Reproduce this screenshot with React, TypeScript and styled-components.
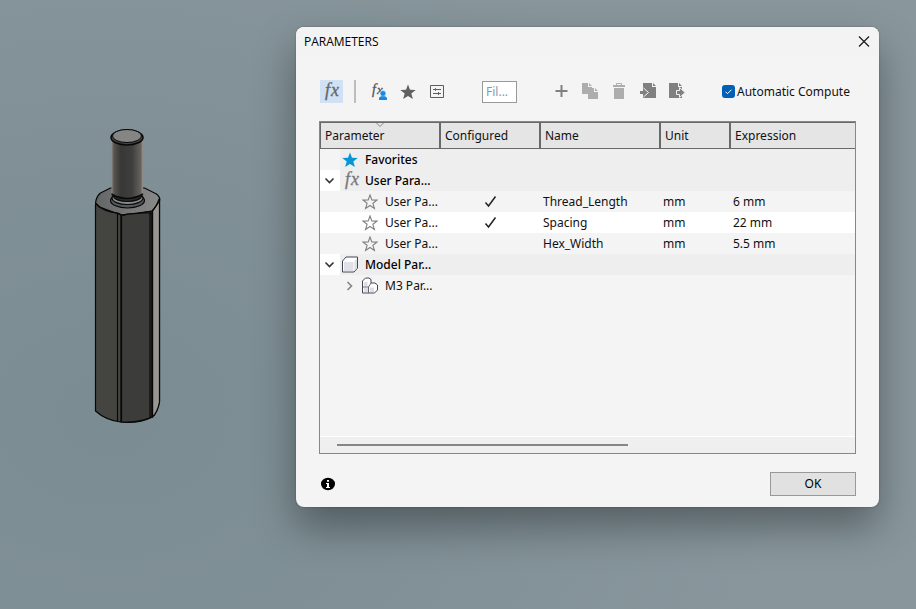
import React from "react";
import styled, { createGlobalStyle } from "styled-components";

const GlobalStyle = createGlobalStyle`
  *, *::before, *::after { box-sizing: border-box; }
  body {
    margin: 0;
    font-family: "Noto Sans", "Open Sans", sans-serif;
    font-size: 12px;
    line-height: 20px;
    color: #111;
  }
`;

const Scene = styled.main`
  display: flex;
  align-items: flex-start;
  min-height: 100vh;
  padding: 27px 37px 27px 0;
  background: radial-gradient(ellipse 75% 90% at 12% 68%, #7b8c93 0%, #809096 50%, #89979d 100%);
`;

const Viewport = styled.section`
  flex: 0 0 296px;
  padding: 100px 0 0 93px;
`;

const Dialog = styled.section`
  flex: 1 1 auto;
  min-width: 560px;
  display: flex;
  flex-direction: column;
  border-radius: 8px;
  background: #f4f4f4;
  box-shadow: 0 0 2px rgba(0, 0, 0, 0.3), 0 20px 40px rgba(0, 0, 0, 0.36);
`;

const TitleBar = styled.header`
  display: flex;
  align-items: center;
  justify-content: space-between;
  height: 29px;
  padding: 0 8px;
  border-radius: 8px 8px 0 0;
  background: #f3f3f3;
`;

const Title = styled.h1`
  margin: 0;
  font-family: "Open Sans", "Noto Sans", sans-serif;
  font-size: 12px;
  font-weight: 400;
  line-height: 20px;
  color: #000;
`;

const PlainButton = styled.button`
  display: flex;
  align-items: center;
  justify-content: center;
  padding: 0;
  border: 0;
  background: none;
  color: inherit;
`;

const Content = styled.div`
  display: flex;
  flex-direction: column;
  padding: 24px 23px 11px;
`;

const Toolbar = styled.div`
  display: flex;
  align-items: center;
  height: 23px;
  margin-bottom: 18px;
  padding-left: 1px;
`;

const ToolGroup = styled.div`
  display: flex;
  gap: 6px;
`;

const ToolButton = styled(PlainButton)<{ $active?: boolean }>`
  width: 23px;
  height: 23px;
  background: ${(p) => (p.$active ? "#cfe1f3" : "transparent")};
`;

const Separator = styled.span`
  width: 2px;
  height: 23px;
  margin: 0 11px;
  background: #bdbdbd;
`;

const Filter = styled.input`
  width: 35px;
  height: 22px;
  margin: 0 33px 0 34px;
  padding: 0 3px;
  border: 1px solid #999;
  border-radius: 0;
  background: #fff;
  font: inherit;
  &::placeholder { color: #7f9bb5; opacity: 1; }
`;

const AutoCompute = styled.label`
  display: flex;
  align-items: center;
  gap: 2px;
  margin-left: 33px;
  white-space: nowrap;
`;

const CheckBox = styled.input`
  appearance: none;
  width: 13px;
  height: 13px;
  margin: 0;
  border-radius: 3px;
  background: #005fb8 url("data:image/svg+xml,%3Csvg xmlns='http://www.w3.org/2000/svg' viewBox='0 0 13 13'%3E%3Cpath d='M3.5 6.7l2 2 4-4' fill='none' stroke='white'/%3E%3C/svg%3E");
`;

const TableFrame = styled.div`
  display: flex;
  flex-direction: column;
  min-height: 333px;
  border: 1px solid #828790;
`;

const Table = styled.table`
  width: 100%;
  table-layout: fixed;
  border-collapse: separate;
  border-spacing: 0;
`;

const HeadCell = styled.th`
  position: relative;
  height: 27px;
  padding: 0 4px;
  border: 1px solid #696969;
  background: #e5e5e5;
  font-weight: 400;
  line-height: 20px;
  text-align: left;
  &:last-child { border-right: 0; }
`;

const SortMark = styled.svg`
  position: absolute;
  top: 0;
  left: calc(50% - 4px);
`;

const Row = styled.tr<{ $tone: string }>`
  background: ${(p) => p.$tone};
`;

const Cell = styled.td`
  height: 21px;
  padding: 0 3px;
  line-height: 20px;
  white-space: nowrap;
`;

const CheckSlot = styled.div`
  display: flex;
  align-items: center;
  justify-content: center;
  height: 19px;
`;

const TreeCell = styled.td`
  height: 21px;
  padding: 0;
`;

const TreeItem = styled.div<{ $child?: boolean }>`
  display: flex;
  align-items: center;
  height: 21px;
  padding-left: ${(p) => (p.$child ? 20 : 0)}px;
`;

const Expander = styled(PlainButton)<{ $tone: string }>`
  flex: 0 0 20px;
  height: 21px;
  background: ${(p) => p.$tone};
`;

const Gutter = styled.span<{ $tone: string }>`
  flex: 0 0 20px;
  height: 21px;
  background: ${(p) => p.$tone};
`;

const IconSlot = styled.span`
  display: flex;
  flex: 0 0 25px;
  align-items: center;
  padding-left: 2px;
`;

const Name = styled.span<{ $strong?: boolean }>`
  line-height: 20px;
  white-space: nowrap;
  font-weight: ${(p) => (p.$strong ? 500 : 400)};
  color: ${(p) => (p.$strong ? "#000" : "#111")};
`;

const ScrollBar = styled.div`
  height: 17px;
  margin-top: auto;
  padding: 7px 17px;
  border-top: 1px solid #fff;
  background: #efefef;
`;

const Thumb = styled.div`
  width: 58%;
  height: 2px;
  background: #868686;
`;

const Footer = styled.footer`
  display: flex;
  align-items: center;
  justify-content: space-between;
  padding: 18px 0 0 2px;
`;

const OkButton = styled.button`
  width: 86px;
  height: 24px;
  padding: 0;
  border: 1px solid #999;
  background: #e1e1e1;
  font: inherit;
  color: #000;
`;

const Glyph = styled.svg`
  overflow: visible;
`;

const GlyphText = styled.text`
  font-family: "Liberation Serif", serif;
  font-style: italic;
`;

const STAR = "M8 1 L9.8 6 L15 6.1 L10.9 9.3 L12.4 14.5 L8 11.5 L3.6 14.5 L5.1 9.3 L1 6.1 L6.2 6 Z";
const BIG_STAR = "M8 .5 L10 5.7 L15.7 5.900 L11.3 9.500 L12.9 15 L8 11.900 L3.100 15 L4.700 9.500 L.3 5.900 L6 5.700 Z";

const FxIcon = ({ color = "#666" }: { color?: string }) => (
  <Glyph width="19" height="21" viewBox="0 0 19 21" aria-hidden="true">
    <GlyphText x="3" y="15" fontSize="18" fill={color} stroke={color} strokeWidth=".3">f</GlyphText>
    <GlyphText x="9" y="15" fontSize="18" fill={color} stroke={color} strokeWidth=".3">x</GlyphText>
  </Glyph>
);

const FxUserIcon = () => (
  <Glyph width="19" height="19" viewBox="0 0 19 19" aria-hidden="true">
    <GlyphText x="3" y="12" fontSize="14" fill="#555" stroke="#555" strokeWidth=".3">f</GlyphText>
    <GlyphText x="8" y="12" fontSize="13" fill="#555" stroke="#555" strokeWidth=".3">x</GlyphText>
    <circle cx="14" cy="11.500" r="2.900" fill="#1688e5" stroke="#f4f4f4" strokeWidth=".6" />
    <path d="M10 18v-2.200l2-1.500h4l2 1.500V18z" fill="#1688e5" />
  </Glyph>
);

const StarIcon = ({ kind }: { kind: "tool" | "favorite" | "outline" }) => (
  <svg width="16" height="16" viewBox="0 0 16 16" aria-hidden="true">
    <path
      d={kind === "outline" ? STAR : BIG_STAR}
      fill={kind === "outline" ? "none" : kind === "tool" ? "#606060" : "#0696d7"}
      stroke={kind === "outline" ? "#808080" : "none"}
      strokeWidth="1.100"
    />
  </svg>
);

const ListIcon = () => (
  <svg width="15" height="15" viewBox="0 0 15 15" fill="none" stroke="#5c5c5c" aria-hidden="true">
    <path d="M1.500 1.500h13v12h-13z" />
    <path d="M4 5.500h8M4 9.500h8" />
    <path d="M6.500 4v3" stroke="#1688e5" />
    <path d="M9.500 8v3" />
  </svg>
);

const PlusIcon = () => (
  <svg width="13" height="13" viewBox="0 0 13 13" aria-hidden="true">
    <path d="M.5 6h12M6.500 0v12" stroke="#808080" strokeWidth="2" />
  </svg>
);

const CopyIcon = () => (
  <svg width="17" height="17" viewBox="0 0 17 17" fill="#adadad" aria-hidden="true">
    <path d="M0 0h6v4h4v1H6v6H0zM7 0l3 3H7zM6 5h6v4h4v7H6zM13 5l3 3h-3z" />
  </svg>
);

const TrashIcon = () => (
  <svg width="13" height="17" viewBox="0 0 13 17" aria-hidden="true">
    <path d="M0 2h12v2H0zM1 5h10v11H1z" fill="#adadad" />
    <path d="M3.500 2V.5h5V2" fill="none" stroke="#adadad" />
  </svg>
);

const ImportIcon = () => (
  <svg width="17" height="17" viewBox="0 0 17 17" aria-hidden="true">
    <path d="M3 0h9v4h4v11H3zM13 0l3 3h-3z" fill="#808080" />
    <path d="M0 8h3V5h1l5 4.500L4 14H3v-3H0z" fill="#808080" />
    <path d="M3.500 5l5 4.500-5 4.500" fill="none" stroke="#f4f4f4" />
  </svg>
);

const ExportIcon = () => (
  <svg width="17" height="17" viewBox="0 0 17 17" aria-hidden="true">
    <path d="M0 0h9v4h4v11H0zM10 0l3 3h-3z" fill="#808080" />
    <path d="M7.500 7.500h3V4.500l5.700 5-5.700 5v-3h-3z" fill="#808080" stroke="#f4f4f4" />
  </svg>
);

const CloseIcon = () => (
  <svg width="14" height="14" viewBox="0 0 14 14" aria-hidden="true">
    <path d="M2 1.500l10 10M12 1.500L2 11.500" stroke="#1b1b1b" strokeWidth="1.200" />
  </svg>
);

const ChevronIcon = ({ open }: { open?: boolean }) => (
  <svg width="12" height="12" viewBox="0 0 12 12" fill="none" aria-hidden="true">
    {open ? (
      <path d="M1.500 3.500l4 4 4-4" stroke="#333" strokeWidth="1.600" />
    ) : (
      <path d="M3.500 2l4 4-4 4" stroke="#858585" strokeWidth="1.600" />
    )}
  </svg>
);

const CheckIcon = () => (
  <svg width="13" height="13" viewBox="0 0 13 13" role="img" aria-label="Configured">
    <path d="M1.500 7.500l3 3.500L11.500 1.500" fill="none" stroke="#222" strokeWidth="1.500" />
  </svg>
);

const BoxIcon = () => (
  <svg width="18" height="17" viewBox="0 0 18 17" strokeLinejoin="round" aria-hidden="true">
    <path d="M.5 5L4 1h11.500v11l-3.500 4H.5z" fill="#fff" stroke="#444450" />
    <path d="M2 6h9.500v9H2z" fill="#dfe0e8" />
    <path d="M12.500 5L15 2.500V12l-2.500 2.500z" fill="#dcdde6" />
  </svg>
);

const PartIcon = () => (
  <svg width="17" height="17" viewBox="0 0 17 17" strokeLinejoin="round" aria-hidden="true">
    <path d="M.5 4l3-3h3.500l2 1.500V6h4l2.500 2v5l-3 3H.5z" fill="#fff" stroke="#444450" />
    <path d="M2 5h3.500v4H2zM2 11h4v4H2zM8 10.500h4V15H8z" fill="#dcdde5" />
    <path d="M.5 10h6M6.500 16v-6L9 6" fill="none" stroke="#666670" />
  </svg>
);

const InfoIcon = () => (
  <svg width="14" height="14" viewBox="0 0 14 14" aria-hidden="true">
    <ellipse cx="7" cy="7" rx="7" ry="6.200" fill="#000" />
    <path d="M6 3h2v1.700H6zM5 6h3v4h1v1H5v-1h1V7H5z" fill="#fff" />
  </svg>
);

const Standoff = () => (
  <svg width="70" height="300" viewBox="93 127 70 300" role="img" aria-label="Hex standoff model">
    <defs>
      <linearGradient id="shaft">
        <stop offset="0" stopColor="#8c8880" />
        <stop offset=".08" stopColor="#55544f" />
        <stop offset=".3" stopColor="#373736" />
        <stop offset=".65" stopColor="#3e3e3d" />
        <stop offset=".93" stopColor="#65635f" />
        <stop offset="1" stopColor="#99958e" />
      </linearGradient>
      <linearGradient id="top">
        <stop offset="0" stopColor="#646566" />
        <stop offset="1" stopColor="#898989" />
      </linearGradient>
    </defs>
    <g stroke="#080808" strokeWidth="1.200" strokeLinejoin="round">
      <path d="M95.500 204v207q10 9 25 11 18 2 32-5 5-4 7-15V198z" fill="#444440" />
      <path d="M121 213h31v204q-14 6-31 5z" fill="#3c3c3b" />
      <path d="M152.500 211l7-13v204q-2 10-7 15z" fill="#999693" />
      <path d="M95.500 203q1-7 5-10l10-5h34l12 6q4 3 3 7l-7 10-31 4-22-8z" fill="url(#top)" />
      <path d="M96 204q8 8 22 9 5 4 9 1 12 0 25-3 5-5 7-12" fill="none" />
      <path d="M117.500 214v208M121.500 216v206M150 212v206M152.500 211v206" fill="none" />
      <ellipse cx="127.500" cy="200.500" rx="17" ry="7.500" fill="#55585a" />
      <ellipse cx="127.500" cy="198" rx="15.500" ry="6.500" fill="#888a8c" />
      <ellipse cx="127.500" cy="196" rx="14" ry="5.500" fill="#292929" />
    </g>
    <path d="M111.500 140v55q15 7 31.500 0v-55z" fill="url(#shaft)" />
    <path d="M111.500 194q15 9 31.500 0" fill="none" stroke="#080808" strokeWidth="1.500" />
    <ellipse cx="127" cy="137.500" rx="16" ry="7.500" fill="#454545" stroke="#080808" strokeWidth="1.500" />
    <ellipse cx="127" cy="136" rx="14.500" ry="6.500" fill="#858584" stroke="#080808" />
  </svg>
);

const userParameters = [
  { configured: true, name: "Thread_Length", unit: "mm", expression: "6 mm" },
  { configured: true, name: "Spacing", unit: "mm", expression: "22 mm" },
  { configured: false, name: "Hex_Width", unit: "mm", expression: "5.5 mm" },
];

const GROUP = "#eeeeee";
const BASE = "#f4f4f4";

const GroupRow = ({ icon, label, expanded }: { icon: React.ReactNode; label: string; expanded?: boolean }) => (
  <Row $tone={GROUP}>
    <TreeCell colSpan={5}>
      <TreeItem>
        {expanded ? (
          <Expander $tone="#fff" aria-label={`Collapse ${label}`}><ChevronIcon open /></Expander>
        ) : (
          <Gutter $tone={BASE} />
        )}
        <IconSlot>{icon}</IconSlot>
        <Name $strong>{label}</Name>
      </TreeItem>
    </TreeCell>
  </Row>
);

export default function App() {
  return (
    <>
      <GlobalStyle />
      <Scene>
        <Viewport><Standoff /></Viewport>
        <Dialog role="dialog" aria-labelledby="dialog-title">
          <TitleBar>
            <Title id="dialog-title">PARAMETERS</Title>
            <PlainButton aria-label="Close"><CloseIcon /></PlainButton>
          </TitleBar>
          <Content>
            <Toolbar role="toolbar">
              <ToolButton $active aria-label="All parameters"><FxIcon /></ToolButton>
              <Separator />
              <ToolGroup>
                <ToolButton aria-label="User parameters"><FxUserIcon /></ToolButton>
                <ToolButton aria-label="Favorites"><StarIcon kind="tool" /></ToolButton>
                <ToolButton aria-label="Configured parameters"><ListIcon /></ToolButton>
              </ToolGroup>
              <Filter aria-label="Filter" placeholder="Fil..." />
              <ToolGroup>
                <ToolButton aria-label="Add"><PlusIcon /></ToolButton>
                <ToolButton aria-label="Copy"><CopyIcon /></ToolButton>
                <ToolButton aria-label="Delete"><TrashIcon /></ToolButton>
                <ToolButton aria-label="Import"><ImportIcon /></ToolButton>
                <ToolButton aria-label="Export"><ExportIcon /></ToolButton>
              </ToolGroup>
              <AutoCompute>
                <CheckBox type="checkbox" defaultChecked />
                Automatic Compute
              </AutoCompute>
            </Toolbar>
            <TableFrame>
              <Table>
                <colgroup>
                  <col width="120" />
                  <col width="100" />
                  <col width="120" />
                  <col width="70" />
                  <col />
                </colgroup>
                <thead>
                  <tr>
                    <HeadCell aria-sort="descending">
                      Parameter
                      <SortMark width="8" height="5" viewBox="0 0 8 5" aria-hidden="true">
                        <path d="M.5 0L4 3.500 7.500 0" fill="none" stroke="#888" />
                      </SortMark>
                    </HeadCell>
                    <HeadCell>Configured</HeadCell>
                    <HeadCell>Name</HeadCell>
                    <HeadCell>Unit</HeadCell>
                    <HeadCell>Expression</HeadCell>
                  </tr>
                </thead>
                <tbody>
                  <GroupRow icon={<StarIcon kind="favorite" />} label="Favorites" />
                  <GroupRow icon={<FxIcon color="#777" />} label="User Para..." expanded />
                  {userParameters.map((p, i) => (
                    <Row key={p.name} $tone={i % 2 ? "#fff" : BASE}>
                      <TreeCell>
                        <TreeItem $child>
                          <Gutter $tone="transparent" />
                          <IconSlot><StarIcon kind="outline" /></IconSlot>
                          <Name>User Pa...</Name>
                        </TreeItem>
                      </TreeCell>
                      <Cell>{p.configured && <CheckSlot><CheckIcon /></CheckSlot>}</Cell>
                      <Cell>{p.name}</Cell>
                      <Cell>{p.unit}</Cell>
                      <Cell>{p.expression}</Cell>
                    </Row>
                  ))}
                  <GroupRow icon={<BoxIcon />} label="Model Par..." expanded />
                  <Row $tone={BASE}>
                    <TreeCell colSpan={5}>
                      <TreeItem $child>
                        <Expander $tone="transparent" aria-label="Expand M3 Par..."><ChevronIcon /></Expander>
                        <IconSlot><PartIcon /></IconSlot>
                        <Name>M3 Par...</Name>
                      </TreeItem>
                    </TreeCell>
                  </Row>
                </tbody>
              </Table>
              <ScrollBar><Thumb /></ScrollBar>
            </TableFrame>
            <Footer>
              <PlainButton aria-label="Information"><InfoIcon /></PlainButton>
              <OkButton>OK</OkButton>
            </Footer>
          </Content>
        </Dialog>
      </Scene>
    </>
  );
}
